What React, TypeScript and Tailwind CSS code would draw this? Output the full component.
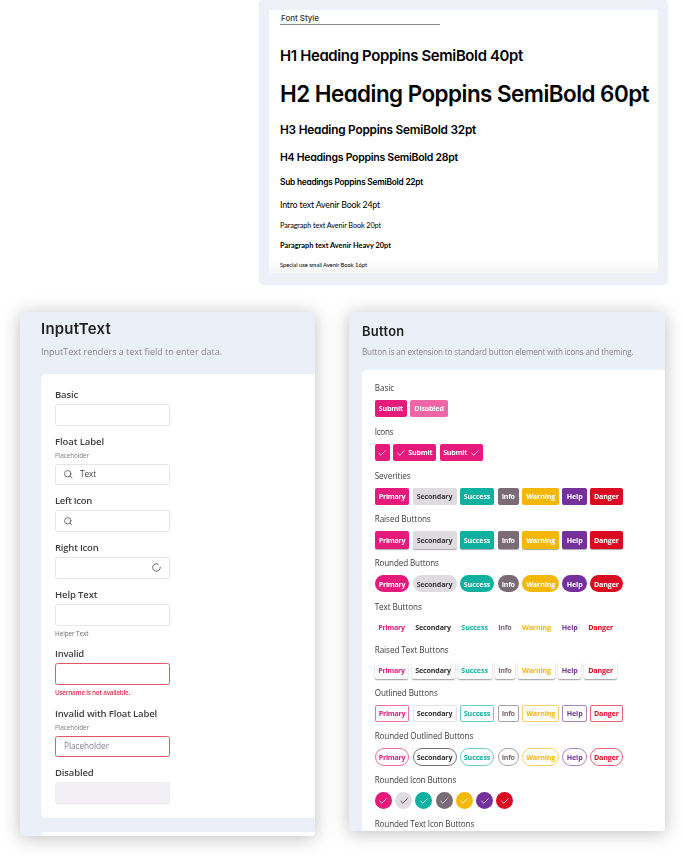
import { useLayoutEffect, useRef, useState, type ReactNode } from "react";

const heading = "font-[Inter,'Liberation_Sans',sans-serif] font-semibold [font-feature-settings:'cv11']";
const body = "font-['Open_Sans','Liberation_Sans',sans-serif]";
const book = "font-[Lato,'Liberation_Sans',sans-serif]";

/* Text whose tracking is adjusted so that it fills the given width. */
function Fit({ w, className = "", children }: { w: number; className?: string; children: string }) {
  const ref = useRef<HTMLSpanElement>(null);
  const [tracking, setTracking] = useState(0);
  useLayoutEffect(() => {
    if (ref.current) {
      const natural = ref.current.getBoundingClientRect().width;
      setTracking((w - natural) / children.length);
    }
  }, []);
  return (
    <span ref={ref} className={`inline-block whitespace-nowrap ${className}`} style={{ letterSpacing: tracking }}>
      {children}
    </span>
  );
}

const specimens = [
  { text: "H1 Heading Poppins SemiBold 40pt", w: 243, cls: `${heading} h-[38px] text-[14.9px]` },
  { text: "H2 Heading Poppins SemiBold 60pt", w: 369, cls: `${heading} h-[38px] text-[22.4px]` },
  { text: "H3 Heading Poppins SemiBold 32pt", w: 196, cls: `${heading} h-[35px] text-[11.8px]` },
  { text: "H4 Headings Poppins SemiBold 28pt", w: 178, cls: `${heading} h-[20px] text-[10.5px]` },
  { text: "Sub headings Poppins SemiBold 22pt", w: 143, cls: `${heading} h-[29px] text-[8.3px]` },
  { text: "Intro text Avenir Book 24pt", w: 100, cls: `${book} h-[16px] text-[8.8px]` },
  { text: "Paragraph text Avenir Book 20pt", w: 101, cls: `${book} h-[27px] text-[7.3px]` },
  { text: "Paragraph text Avenir Heavy 20pt", w: 111, cls: `${book} h-[12px] text-[7.4px] font-bold` },
  { text: "Special use small Avenir Book 16pt", w: 87, cls: `${book} h-[27px] text-[5.8px]` },
];

function FontCard() {
  return (
    <section className="ml-[259px] h-[285px] w-[409px] rounded-b-[4px] rounded-t-[3px] bg-[#edf1f7] px-[10px] pt-[10px]">
      <div className="h-[263px] bg-linear-to-b from-white from-95% to-[#f5f5f5] pl-[11px] text-black">
        <div className={`${heading} flex h-[15px] w-[160px] items-center border-b border-[#8a8a8a] pl-[1px] pt-[2px] text-[8px] font-medium! text-[#333]`}>
          <Fit w={38}>Font Style</Fit>
        </div>
        <div className="h-[12px]" />
        {specimens.map((s) => (
          <div key={s.text} className={`flex items-center ${s.cls}`}>
            <Fit w={s.w}>{s.text}</Fit>
          </div>
        ))}
      </div>
    </section>
  );
}

function Search() {
  return (
    <svg viewBox="0 0 16 16" className="size-[8.5px]" fill="none" stroke="#55505c" strokeWidth="1.5" strokeLinecap="round">
      <circle cx="7" cy="7" r="6" />
      <path d="M11.4 11.4 15.2 15.2" />
    </svg>
  );
}

function Spinner() {
  return (
    <svg viewBox="0 0 16 16" className="size-[9px]" fill="none" stroke="#5d5863" strokeWidth="1.6" strokeLinecap="round">
      <path d="M14.8 7.4A6.8 6.8 0 1 1 3.2 3.2A6.8 6.8 0 0 1 11.2 2" />
    </svg>
  );
}

type FieldProps = {
  label: string;
  w: number;
  size: string;
  caption?: boolean;
  help?: ReactNode;
  box?: string;
  children?: ReactNode;
};

function Field({ label, w, size, caption, help, box = "border-[#e6e5e8] bg-white", children }: FieldProps) {
  return (
    <div className={`${size} shrink-0`}>
      <div className="flex h-[12px] items-center pt-[0.5px] text-[9.5px] font-semibold text-[#3f3f43]">
        <Fit w={w}>{label}</Fit>
      </div>
      {caption && (
        <div className="mt-[3px] flex h-[10px] items-center pt-[1px] text-[6.4px] text-[#7d7785]">
          <Fit w={34}>Placeholder</Fit>
        </div>
      )}
      <div className={`mt-[3px] flex h-[21.5px] w-[115px] items-center rounded-[2.5px] border px-[8px] text-[8.3px] ${box}`}>{children}</div>
      {help && <div className="mt-[2px] flex h-[10px] items-center pt-[2px] text-[6.4px]">{help}</div>}
    </div>
  );
}

function InputCard() {
  return (
    <section className={`${body} mt-[27px] flex h-[524px] w-[295px] flex-col overflow-hidden rounded-[4px] bg-[#ebeff7] pl-[21px]`}>
      <div className={`${heading} mt-[8px] flex h-[18px] shrink-0 items-center text-[14.9px] text-[#222]`}>
        <Fit w={70}>InputText</Fit>
      </div>
      <div className="mt-[8px] flex h-[12px] shrink-0 items-center text-[9.1px] text-[#8b8591]">
        <Fit w={181}>InputText renders a text field to enter data.</Fit>
      </div>
      <div className="mt-[16px] h-[443.5px] shrink-0 rounded-l-[5px] bg-white pl-[14px] pt-[15px]">
        <Field label="Basic" w={23} size="h-[46.5px]" />
        <Field label="Float Label" w={49} size="h-[59.5px]" caption>
          <Search />
          <Fit w={16} className="ml-[7.5px] text-[#444]">Text</Fit>
        </Field>
        <Field label="Left Icon" w={37} size="h-[47px]">
          <Search />
        </Field>
        <Field label="Right Icon" w={43.5} size="h-[47px]">
          <span className="ml-auto flex"><Spinner /></span>
        </Field>
        <Field label="Help Text" w={42.5} size="h-[59px]" help={<Fit w={33.5} className="text-[#6f6a76]">Helper Text</Fit>} />
        <Field
          label="Invalid"
          w={29}
          size="h-[59.5px]"
          box="border-[#e8546a] bg-white"
          help={<Fit w={75} className="font-semibold text-[#e0354d]">Username is not available.</Fit>}
        />
        <Field label="Invalid with Float Label" w={102} size="h-[59.5px]" caption box="border-[#e8546a] bg-white">
          <Fit w={45} className="text-[#857f8d]">Placeholder</Fit>
        </Field>
        <Field label="Disabled" w={38.5} size="h-[37px]" box="border-[#eeebef] bg-[#f2f0f4]" />
      </div>
      <div className="mt-[14.5px] h-[10px] shrink-0 rounded-tl-[5px] bg-white" />
    </section>
  );
}

function Check() {
  return (
    <svg viewBox="0 0 16 12" className="h-[6px] w-[8px]" fill="none" stroke="currentColor" strokeWidth="1.6" strokeLinecap="round" strokeLinejoin="round">
      <path d="m1.5 6.5 4.2 4L14.5 1.5" />
    </svg>
  );
}

type Kind = { name: string; text: number; solid: string; flat: string; line: string; roundLine: string; box: string; flatBox: string };

const kinds: Kind[] = [
  { name: "Primary", text: 26.5, solid: "bg-[#e61a7b] text-white", flat: "text-[#e61a7b]", line: "border-[#ee6daa]", roundLine: "border-[#ee6daa]", box: "w-[34.8px]", flatBox: "w-[33.8px]" },
  { name: "Secondary", text: 35.5, solid: "bg-[#dfdbe0] text-[#3b373e]", flat: "text-[#303033]", line: "border-[#e6e3e7]", roundLine: "border-[#77757a]", box: "w-[44px]", flatBox: "w-[43px]" },
  { name: "Success", text: 26.5, solid: "bg-[#0eb0a0] text-white", flat: "text-[#0eb0a0]", line: "border-[#6dd0c6]", roundLine: "border-[#6dd0c6]", box: "w-[34.9px]", flatBox: "w-[34px]" },
  { name: "Info", text: 13, solid: "bg-[#7a6b77] text-white", flat: "text-[#7a6b77]", line: "border-[#aaa1aa]", roundLine: "border-[#aaa1aa]", box: "w-[21.4px]", flatBox: "w-[20.4px]" },
  { name: "Warning", text: 29, solid: "bg-[#f5b705] text-white", flat: "text-[#f5b705]", line: "border-[#f7d068]", roundLine: "border-[#f7d068]", box: "w-[37.4px]", flatBox: "w-[36.8px]" },
  { name: "Help", text: 16, solid: "bg-[#74319c] text-white", flat: "text-[#74319c]", line: "border-[#aa83c4]", roundLine: "border-[#aa83c4]", box: "w-[24.5px]", flatBox: "w-[23.5px]" },
  { name: "Danger", text: 25, solid: "bg-[#dc0a20] text-white", flat: "text-[#dc0a20]", line: "border-[#e96471]", roundLine: "border-[#e96471]", box: "w-[33px]", flatBox: "w-[32.4px]" },
];

function Group({ title, w, size, gap = "gap-[3.05px]", children }: { title: string; w: number; size: string; gap?: string; children?: ReactNode }) {
  return (
    <div className={`${size} shrink-0`}>
      <div className="flex h-[12px] items-center text-[8.1px] font-medium text-[#3b3b3f]">
        <Fit w={w}>{title}</Fit>
      </div>
      <div className={`mt-[6px] flex text-[7.1px] font-bold ${gap}`}>{children}</div>
    </div>
  );
}

function Buttons({ look }: { look: (k: Kind) => string }) {
  return (
    <>
      {kinds.map((k) => (
        <button key={k.name} className={`flex h-[17.3px] shrink-0 items-center justify-center ${look(k)}`}>
          <Fit w={k.text}>{k.name}</Fit>
        </button>
      ))}
    </>
  );
}

const pink = "flex h-[17.3px] items-center justify-center rounded-[2px] text-white";

function ButtonCard() {
  return (
    <section className={`${body} mt-[27px] flex h-[519px] w-[316px] flex-col overflow-hidden rounded-[4px] bg-[#ebeff7] pl-[13px]`}>
      <div className={`${heading} mt-[11px] flex h-[16px] shrink-0 items-center pt-[1px] text-[12.9px] text-[#222]`}>
        <Fit w={42.5}>Button</Fit>
      </div>
      <div className="mt-[7px] flex h-[12px] shrink-0 items-center pt-[0.5px] text-[8.1px] text-[#8b8591]">
        <Fit w={271.5}>Button is an extension to standard button element with icons and theming.</Fit>
      </div>
      <div className="mt-[12px] h-[470px] shrink-0 rounded-tl-[5px] bg-white pl-[12.7px] pt-[12px]">
        <Group title="Basic" w={19.5} size="h-[44px]">
          <button className={`${pink} w-[32.3px] bg-[#e61a7b]`}><Fit w={24}>Submit</Fit></button>
          <button className={`${pink} w-[38px] bg-[#ef66a6]`}><Fit w={29.5}>Disabled</Fit></button>
        </Group>
        <Group title="Icons" w={18.5} size="h-[43.7px]" gap="gap-[3.4px]">
          <button className={`${pink} w-[15.2px] bg-[#e61a7b]`}><Check /></button>
          <button className={`${pink} w-[43px] gap-[3px] bg-[#e61a7b]`}><Check /><Fit w={24}>Submit</Fit></button>
          <button className={`${pink} w-[43px] gap-[4px] bg-[#e61a7b]`}><Fit w={24}>Submit</Fit><Check /></button>
        </Group>
        <Group title="Severities" w={36} size="h-[43.8px]">
          <Buttons look={(k) => `rounded-[2px] ${k.box} ${k.solid}`} />
        </Group>
        <Group title="Raised Buttons" w={56} size="h-[43.7px]">
          <Buttons look={(k) => `rounded-[2px] shadow-[0_1px_1px_rgba(0,0,0,0.35)] ${k.box} ${k.solid}`} />
        </Group>
        <Group title="Rounded Buttons" w={64} size="h-[43.8px]">
          <Buttons look={(k) => `rounded-full ${k.box} ${k.solid}`} />
        </Group>
        <Group title="Text Buttons" w={47} size="h-[43px]">
          <Buttons look={(k) => `pb-[1.5px] ${k.flatBox} ${k.flat}`} />
        </Group>
        <Group title="Raised Text Buttons" w={74} size="h-[43px]">
          <Buttons look={(k) => `rounded-[2px] bg-white shadow-[0_1px_1.5px_rgba(0,0,0,0.4)] ${k.flatBox} ${k.flat}`} />
        </Group>
        <Group title="Outlined Buttons" w={63} size="h-[43.5px]">
          <Buttons look={(k) => `rounded-[2px] border ${k.box} ${k.flat} ${k.line}`} />
        </Group>
        <Group title="Rounded Outlined Buttons" w={98.5} size="h-[43.7px]">
          <Buttons look={(k) => `rounded-full border ${k.box} ${k.flat} ${k.roundLine}`} />
        </Group>
        <Group title="Rounded Icon Buttons" w={81.5} size="h-[44px]" gap="gap-[3.2px]">
          {kinds.map((k) => (
            <button key={k.name} className={`flex size-[17.1px] items-center justify-center rounded-full ${k.solid}`}><Check /></button>
          ))}
        </Group>
        <Group title="Rounded Text Icon Buttons" w={99.5} size="h-[12px]" />
      </div>
    </section>
  );
}

export default function App() {
  return (
    <main className="h-[856px] w-[685px] overflow-hidden bg-white">
      <FontCard />
      <div className="flex items-start gap-[34px] pl-[20px]">
        <div className="[filter:drop-shadow(0_2px_9px_rgba(0,0,0,0.25))]"><InputCard /></div>
        <div className="[filter:drop-shadow(0_2px_9px_rgba(0,0,0,0.25))]"><ButtonCard /></div>
      </div>
    </main>
  );
}
